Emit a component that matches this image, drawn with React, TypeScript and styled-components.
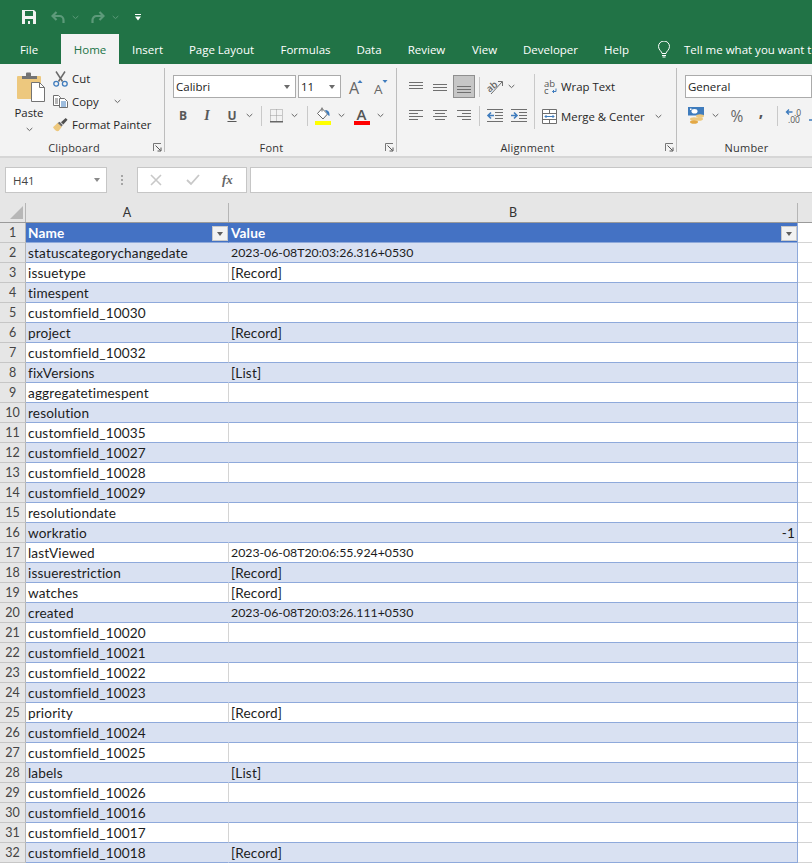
import styled, { createGlobalStyle } from "styled-components";

const rows: [string, string?][] = [
  ["statuscategorychangedate", "2023-06-08T20:03:26.316+0530"],
  ["issuetype", "[Record]"],
  ["timespent"],
  ["customfield_10030"],
  ["project", "[Record]"],
  ["customfield_10032"],
  ["fixVersions", "[List]"],
  ["aggregatetimespent"],
  ["resolution"],
  ["customfield_10035"],
  ["customfield_10027"],
  ["customfield_10028"],
  ["customfield_10029"],
  ["resolutiondate"],
  ["workratio", "-1"],
  ["lastViewed", "2023-06-08T20:06:55.924+0530"],
  ["issuerestriction", "[Record]"],
  ["watches", "[Record]"],
  ["created", "2023-06-08T20:03:26.111+0530"],
  ["customfield_10020"],
  ["customfield_10021"],
  ["customfield_10022"],
  ["customfield_10023"],
  ["priority", "[Record]"],
  ["customfield_10024"],
  ["customfield_10025"],
  ["labels", "[List]"],
  ["customfield_10026"],
  ["customfield_10016"],
  ["customfield_10017"],
  ["customfield_10018", "[Record]"],
];

const tabs: [string, number][] = [
  ["Insert", 57],
  ["Page Layout", 91],
  ["Formulas", 77],
  ["Data", 50],
  ["Review", 65],
  ["View", 51],
  ["Developer", 81],
  ["Help", 51],
];

const GlobalStyle = createGlobalStyle`
  html, body {
    margin: 0;
    height: 864px;
    overflow: hidden;
    background: #fff;
    font-family: "Open Sans", "Liberation Sans", sans-serif;
  }
`;

const Page = styled.div`
  width: 812px;
  height: 864px;
  overflow: hidden;
`;

const TitleBar = styled.div`
  height: 34px;
  background: #217346;
  display: flex;
  align-items: center;
  padding-left: 22px;
  svg { display: block; flex: none; }
`;

const TabBar = styled.div`
  height: 30px;
  background: #217346;
  display: flex;
  align-items: stretch;
  color: #fff;
  font-size: 11.5px;
  white-space: nowrap;
  overflow: hidden;
`;

const Tab = styled.div<{ $active?: boolean; $w: number }>`
  width: ${(p) => p.$w}px;
  flex: none;
  display: flex;
  align-items: center;
  justify-content: center;
  background: ${(p) => (p.$active ? "#f3f3f3" : "transparent")};
  color: ${(p) => (p.$active ? "#217346" : "#fff")};
`;

const TellMe = styled.div`
  display: flex;
  align-items: center;
  gap: 14px;
  padding-left: 16px;
`;

const Ribbon = styled.div`
  height: 94px;
  background: #f3f3f3;
  border-bottom: 2px solid #d6d6d6;
  box-sizing: border-box;
  display: flex;
  font-size: 11.4px;
  color: #262626;
  white-space: nowrap;
  overflow: hidden;
`;

const Group = styled.div<{ $w: number; $last?: boolean }>`
  width: ${(p) => p.$w}px;
  flex: none;
  box-sizing: border-box;
  margin-top: 4px;
  height: 84px;
  border-right: ${(p) => (p.$last ? "none" : "1px solid #bdbdbd")};
  display: flex;
  flex-direction: column;
`;

const GroupBody = styled.div<{ $pad: number }>`
  height: 70px;
  flex: none;
  padding-left: ${(p) => p.$pad}px;
  display: flex;
`;

const GroupFoot = styled.div<{ $shift: number }>`
  height: 14px;
  position: relative;
  padding: 0 ${(p) => Math.max(p.$shift, 0)}px 0 ${(p) => Math.max(-p.$shift, 0)}px;
  font-size: 11px;
  line-height: 20px;
  text-align: center;
  color: #333;
  letter-spacing: 0.2px;
`;

const LauncherIcon = styled.svg`
  position: absolute;
  right: 2px;
  top: 5px;
`;

const Launcher = () => (
  <LauncherIcon width="9" height="9" viewBox="0 0 9 9">
    <path d="M.5 8V.5H8" fill="none" stroke="#777" />
    <path d="M2.500 2.500l5 5M8 4.500V8H4.500" fill="none" stroke="#555" />
  </LauncherIcon>
);

const PasteCol = styled.div`
  width: 32px;
  flex: none;
  display: flex;
  flex-direction: column;
  align-items: center;
  padding-top: 4px;
`;

const PasteLabel = styled.div`
  margin-top: 2px;
  margin-bottom: 6px;
  line-height: 17px;
`;

const ClipList = styled.div`
  display: flex;
  flex-direction: column;
  margin: -1px 0 0 8px;
`;

const ClipItem = styled.div`
  height: 23px;
  flex: none;
  display: flex;
  align-items: center;
  gap: 4px;
`;

const Stack = styled.div<{ $w?: number }>`
  width: ${(p) => (p.$w ? `${p.$w}px` : "auto")};
  flex: none;
  display: flex;
  flex-direction: column;
  gap: 3px;
  padding-top: 7px;
`;

const WrapCol = styled.div`
  height: 55px;
  margin-top: 6px;
  flex: none;
  border-left: 1px solid #c9c9c9;
  display: flex;
  flex-direction: column;
  gap: 4px;
  padding-top: 1px;
  box-sizing: border-box;
`;

const ToolRow = styled.div<{ $pad?: number }>`
  height: 23px;
  flex: none;
  display: flex;
  align-items: center;
  margin-bottom: 3px;
  padding-left: ${(p) => p.$pad ?? 0}px;
  svg { display: block; flex: none; overflow: visible; }
`;

const Combo = styled.div<{ $w: number }>`
  width: ${(p) => p.$w}px;
  height: 23px;
  flex: none;
  box-sizing: border-box;
  background: #fff;
  border: 1px solid #ababab;
  display: flex;
  align-items: center;
  justify-content: space-between;
  padding: 0 5px 0 2px;
  font-size: 11.5px;
  color: #222;
`;

const Caret = styled.span<{ $color?: string }>`
  width: 0;
  height: 0;
  flex: none;
  border-left: 3.500px solid transparent;
  border-right: 3.500px solid transparent;
  border-top: 4px solid ${(p) => p.$color ?? "#6b6b6b"};
`;

const Gap = styled.span<{ $w: number }>`
  display: block;
  width: ${(p) => p.$w}px;
  flex: none;
`;

const VRule = styled.span`
  display: block;
  width: 1px;
  height: 20px;
  background: #c9c9c9;
  flex: none;
`;

const Glyph = styled.span<{ $italic?: boolean; $under?: boolean }>`
  width: 10px;
  flex: none;
  text-align: center;
  font-family: ${(p) => (p.$italic ? '"Liberation Serif", serif' : '"Open Sans", sans-serif')};
  font-weight: 700;
  font-style: ${(p) => (p.$italic ? "italic" : "normal")};
  font-size: ${(p) => (p.$italic ? 14 : 12)}px;
  color: #595959;
  text-decoration: ${(p) => (p.$under ? "underline" : "none")};
`;

const Percent = styled.span`
  width: 14px;
  flex: none;
  font-size: 15.500px;
  color: #666;
  text-align: center;
`;

const Comma = styled.span`
  width: 6px;
  flex: none;
  font-size: 16px;
  line-height: 14px;
  font-weight: 700;
  color: #555;
  text-align: center;
  position: relative;
  top: -5px;
`;

const Pressed = styled.span`
  width: 22px;
  height: 23px;
  flex: none;
  box-sizing: border-box;
  background: #c6c6c6;
  border: 1px solid #8f8f8f;
  display: flex;
  align-items: center;
  justify-content: center;
`;

const Chevron = ({ color = "#666" }: { color?: string }) => (
  <svg width="7" height="5" viewBox="0 0 7 5">
    <path d="M.7 1l2.800 2.600L6.300 1" fill="none" stroke={color} strokeWidth="1" />
  </svg>
);

const Lines = ({ ws, y = 2 }: { ws: [number, number][]; y?: number }) => (
  <svg width="16" height="16" viewBox="0 0 16 16">
    {ws.map(([x, w], i) => (
      <rect key={i} x={x} y={y + i * 3} width={w} height="1" fill="#6f6f6f" />
    ))}
  </svg>
);

const FormulaStrip = styled.div`
  height: 45px;
  background: #e6e6e6;
  box-sizing: border-box;
  display: flex;
  align-items: flex-start;
  padding: 9px 0 0 5px;
`;

const NameBox = styled.div`
  width: 102px;
  height: 26px;
  box-sizing: border-box;
  background: #fff;
  border: 1px solid #c6c6c6;
  display: flex;
  align-items: center;
  justify-content: space-between;
  padding: 0 6px 0 7px;
  font-size: 11.500px;
  color: #444;
  flex: none;
`;

const Dots = styled.div`
  width: 30px;
  height: 26px;
  flex: none;
  display: flex;
  flex-direction: column;
  align-items: center;
  justify-content: center;
  gap: 2px;
  i { width: 2px; height: 2px; background: #a5a5a5; }
`;

const FormulaButtons = styled.div`
  width: 110px;
  height: 26px;
  flex: none;
  box-sizing: border-box;
  background: #fff;
  border: 1px solid #c6c6c6;
  display: flex;
  align-items: center;
  padding-left: 12px;
`;

const FxLabel = styled.span`
  font-family: "Liberation Serif", serif;
  font-style: italic;
  font-size: 13px;
  color: #666;
  font-weight: 700;
`;

const FormulaInput = styled.div`
  flex: 1;
  height: 26px;
  margin-left: 3px;
  background: #fff;
  border: 1px solid #c6c6c6;
  border-right: none;
  box-sizing: border-box;
`;

const HeaderStrip = styled.div`
  height: 20px;
  display: flex;
  background: #e6e6e6;
  border-bottom: 1px solid #9a9a9a;
  box-sizing: border-box;
  font-family: "Lato", sans-serif;
  font-size: 12.500px;
  color: #333;
`;

const Corner = styled.div`
  width: 26px;
  flex: none;
  box-sizing: border-box;
  border-right: 1px solid #b5b5b5;
  position: relative;
  svg { position: absolute; left: 10px; bottom: 3px; }
`;

const ColHead = styled.div<{ $w: number }>`
  width: ${(p) => p.$w}px;
  flex: none;
  box-sizing: border-box;
  border-right: 1px solid #b5b5b5;
  display: flex;
  align-items: center;
  justify-content: center;
`;

const Row = styled.div`
  height: 20px;
  display: flex;
  font-family: "Lato", sans-serif;
  font-size: 13.600px;
  color: #222;
`;

const RowNo = styled.div`
  width: 26px;
  flex: none;
  box-sizing: border-box;
  background: #e6e6e6;
  border-right: 1px solid #b5b5b5;
  border-bottom: 1px solid #c6c6c6;
  color: #444;
  font-size: 12.500px;
  display: flex;
  align-items: center;
  justify-content: center;
`;

const Cell = styled.div<{
  $w: number;
  $band?: boolean;
  $head?: boolean;
  $right?: boolean;
  $rule?: boolean;
  $date?: boolean;
}>`
  width: ${(p) => p.$w}px;
  flex: none;
  box-sizing: border-box;
  background: ${(p) => (p.$head ? "#4472c4" : p.$band ? "#d9e1f2" : "#fff")};
  color: ${(p) => (p.$head ? "#fff" : "#1c1c1c")};
  font-weight: ${(p) => (p.$head ? 700 : 400)};
  font-size: ${(p) => (p.$date ? "12.300px" : "inherit")};
  letter-spacing: ${(p) => (p.$date ? 0 : 0.15)}px;
  border-bottom: 1px solid #8ea9db;
  border-right: 1px solid ${(p) => (p.$rule ? "#8ea9db" : p.$band || p.$head ? "transparent" : "#d4d4d4")};
  display: flex;
  align-items: center;
  justify-content: ${(p) => (p.$right ? "flex-end" : "space-between")};
  padding: 0 ${(p) => (p.$right ? 2 : 0)}px 0 2px;
  white-space: nowrap;
`;

const FilterBtn = styled.span`
  width: 16px;
  height: 15px;
  box-sizing: border-box;
  background: #f2f2f2;
  border: 1px solid #c9c9c9;
  display: flex;
  align-items: center;
  justify-content: center;
  align-self: flex-end;
  margin-bottom: 1px;
`;

const Outside = styled.div`
  flex: 1;
  background: #fff;
  border-bottom: 1px solid #d4d4d4;
`;

const FilterRow = () => (
  <FilterBtn>
    <Caret $color="#5f5f5f" />
  </FilterBtn>
);

const dim = "#5d9a7a";

export default function App() {
  return (
    <Page>
      <GlobalStyle />
      <TitleBar>
        <svg width="14" height="14" viewBox="0 0 14 14">
          <path d="M0 0h12l2 2v12H0z" fill="#f2f2f2" />
          <rect x="3" y="1" width="8" height="5" fill="#217346" />
          <rect x="3" y="9" width="8" height="5" fill="#217346" />
          <rect x="6" y="11" width="2" height="3" fill="#f2f2f2" />
        </svg>
        <Gap $w={15} />
        <svg width="14" height="13" viewBox="0 0 14 13">
          <path d="M5.500 1L1.500 5l4 4M1.500 5h7a4 4 0 0 1 4 4v3" fill="none" stroke={dim} strokeWidth="2.200" />
        </svg>
        <Gap $w={7} />
        <Chevron color={dim} />
        <Gap $w={12} />
        <svg width="14" height="13" viewBox="0 0 14 13">
          <path d="M8.500 1l4 4-4 4M12.500 5h-7a4 4 0 0 0-4 4v3" fill="none" stroke={dim} strokeWidth="2.200" />
        </svg>
        <Gap $w={7} />
        <Chevron color={dim} />
        <Gap $w={16} />
        <svg width="6" height="7" viewBox="0 0 6 7">
          <rect x="0" y="0" width="6" height="1" fill="#fff" />
          <path d="M0 2.500h6L3 6.500z" fill="#fff" />
        </svg>
      </TitleBar>
      <TabBar>
        <Tab $w={58}>File</Tab>
        <Gap $w={3} />
        <Tab $w={58} $active>Home</Tab>
        {tabs.map(([t, w]) => (
          <Tab key={t} $w={w}>{t}</Tab>
        ))}
        <TellMe>
          <svg width="12" height="17" viewBox="0 0 12 17">
            <path d="M4 12.500c0-2-3.500-3.500-3.500-7a5.500 5.500 0 0 1 11 0c0 3.500-3.500 5-3.500 7z" fill="none" stroke="#fff" />
            <path d="M4 14.500h4M4.500 16h3" stroke="#fff" />
          </svg>
          <span>Tell me what you want to do</span>
        </TellMe>
      </TabBar>
      <Ribbon>
        <Group $w={165}>
          <GroupBody $pad={13}>
            <PasteCol>
              <svg width="32" height="30" viewBox="0 0 32 30" style={{ display: "block" }}>
                <rect x="4" y="4" width="24" height="23" rx="1" fill="#edc87e" />
                <path d="M9 7V4h4V1.500a1 1 0 0 1 1-1h3a1 1 0 0 1 1 1V4h6v3z" fill="#737373" />
                <path d="M18.500 10.500h8l5 5v14h-13z" fill="#fff" stroke="#737373" />
                <path d="M26.500 10.500v5h5" fill="none" stroke="#737373" />
              </svg>
              <PasteLabel>Paste</PasteLabel>
              <Chevron />
            </PasteCol>
            <ClipList>
              <ClipItem>
                <svg width="15" height="16" viewBox="0 0 15 16" style={{ display: "block" }}>
                  <path d="M3 .5l6.500 10M12 .5L5.500 10.500" stroke="#6a6a6a" strokeWidth="1.500" />
                  <circle cx="3.200" cy="12.700" r="2.400" fill="none" stroke="#3f7cbd" strokeWidth="1.300" />
                  <circle cx="11.800" cy="12.700" r="2.400" fill="none" stroke="#3f7cbd" strokeWidth="1.300" />
                </svg>
                <span>Cut</span>
              </ClipItem>
              <ClipItem>
                <svg width="15" height="15" viewBox="0 0 15 15" style={{ display: "block" }}>
                  <path d="M.5 1.500h5l2 2v8h-7z" fill="#fff" stroke="#6f6f6f" />
                  <path d="M6.500 4.500h5l3 3v6h-8z" fill="#fff" stroke="#6f6f6f" />
                  <path d="M2 5h3M2 7h3M2 9h3" stroke="#6f6f6f" />
                  <path d="M8 8h5M8 10h5M8 12h5" stroke="#3f7cbd" />
                </svg>
                <span>Copy</span>
                <Gap $w={7} />
                <Chevron />
              </ClipItem>
              <ClipItem>
                <svg width="15" height="15" viewBox="0 0 16 15" style={{ display: "block" }}>
                  <path d="M0 10.500l5-5 4.500 4.500-3.500 4.500c-2 .5-4-.5-6-4z" fill="#edc87e" />
                  <path d="M5 6l2-1.500 3.500 3.500L9 9.500z" fill="#6a6a6a" />
                  <path d="M8.500 5l5-4.500 2 2-4.500 5z" fill="#4f4f4f" />
                </svg>
                <span>Format Painter</span>
              </ClipItem>
            </ClipList>
          </GroupBody>
          <GroupFoot $shift={16}>
            Clipboard
            <Launcher />
          </GroupFoot>
        </Group>
        <Group $w={232}>
          <GroupBody $pad={8}>
            <Stack>
              <ToolRow>
                <Combo $w={123}>Calibri<Caret /></Combo>
                <Gap $w={2} />
                <Combo $w={43}>11<Caret /></Combo>
                <Gap $w={8} />
                <svg width="15" height="16" viewBox="0 0 15 16">
                  <text x="0" y="15" fontSize="16" fill="#666" fontFamily="Open Sans, sans-serif">A</text>
                  <path d="M8.500 4l2.500-3 2.500 3z" fill="#3f7cbd" />
                </svg>
                <Gap $w={10} />
                <svg width="15" height="16" viewBox="0 0 15 16">
                  <text x="0" y="15" fontSize="13.500" fill="#666" fontFamily="Open Sans, sans-serif">A</text>
                  <path d="M8.500 1h5L11 4z" fill="#3f7cbd" />
                </svg>
              </ToolRow>
              <ToolRow $pad={5}>
                <Glyph>B</Glyph>
                <Gap $w={14} />
                <Glyph $italic>I</Glyph>
                <Gap $w={15} />
                <Glyph $under>U</Glyph>
                <Gap $w={9} />
                <Chevron />
                <Gap $w={8} />
                <VRule />
                <Gap $w={8} />
                <svg width="13" height="14" viewBox="0 0 13 14">
                  <path d="M.5.500h12v12H.500zM6.500.500v12M.500 6.500h12" fill="none" stroke="#9a9a9a" strokeDasharray="1 1" />
                  <rect x="0" y="12" width="13" height="1.500" fill="#666" />
                </svg>
                <Gap $w={8} />
                <Chevron />
                <Gap $w={9} />
                <VRule />
                <Gap $w={7} />
                <svg width="16" height="18" viewBox="0 0 16 18">
                  <path d="M7 1.500l5.500 5.500-4.500 5-5.500-5.500z" fill="#fff" stroke="#666" />
                  <path d="M7 .5v4" stroke="#666" />
                  <path d="M10 3c3 0 5 2 4.500 6-1.500-.5-2-2-4.500-6z" fill="#3f7cbd" />
                  <rect x="0" y="14" width="16" height="4" fill="#ffff00" />
                </svg>
                <Gap $w={7} />
                <Chevron />
                <Gap $w={9} />
                <svg width="16" height="18" viewBox="0 0 16 18">
                  <text x="2.500" y="12.500" fontSize="15" fontWeight="600" fill="#555" fontFamily="Open Sans, sans-serif">A</text>
                  <rect x="0" y="14" width="16" height="4" fill="#ff0000" />
                </svg>
                <Gap $w={7} />
                <Chevron />
              </ToolRow>
            </Stack>
          </GroupBody>
          <GroupFoot $shift={18}>
            Font
            <Launcher />
          </GroupFoot>
        </Group>
        <Group $w={280}>
          <GroupBody $pad={11}>
            <Stack $w={126}>
              <ToolRow>
                <Lines ws={[[1, 14], [1, 14], [1, 14]]} y={3} />
                <Gap $w={8} />
                <Lines ws={[[1, 14], [1, 14], [1, 14]]} y={5} />
                <Gap $w={5} />
                <Pressed>
                  <Lines ws={[[1, 14], [1, 14], [1, 14]]} y={7} />
                </Pressed>
                <Gap $w={4} />
                <VRule />
                <Gap $w={7} />
                <svg width="17" height="16" viewBox="0 0 17 16">
                  <text x="0" y="11" fontSize="9.500" fill="#666" fontWeight="600" fontFamily="Open Sans, sans-serif" transform="rotate(-40 5 9)">ab</text>
                  <path d="M4 15L15 3M11 2.500h4.500V7" fill="none" stroke="#6f6f6f" />
                </svg>
                <Gap $w={4} />
                <Chevron />
              </ToolRow>
              <ToolRow>
                <Lines ws={[[1, 14], [1, 9], [1, 14], [1, 9]]} y={2} />
                <Gap $w={8} />
                <Lines ws={[[1, 14], [3, 10], [1, 14], [3, 10]]} y={2} />
                <Gap $w={8} />
                <Lines ws={[[1, 14], [6, 9], [1, 14], [6, 9]]} y={2} />
                <Gap $w={7} />
                <VRule />
                <Gap $w={7} />
                <svg width="17" height="14" viewBox="0 0 17 14">
                  <path d="M0 .5h16M8 3.500h8M8 6.500h8M8 9.500h8M0 12.500h16" stroke="#6f6f6f" />
                  <path d="M7 6.500H1.500M4 3.500l-3 3 3 3" fill="none" stroke="#3f7cbd" strokeWidth="1.600" />
                </svg>
                <Gap $w={7} />
                <svg width="17" height="14" viewBox="0 0 17 14">
                  <path d="M0 .5h16M8 3.500h8M8 6.500h8M8 9.500h8M0 12.500h16" stroke="#6f6f6f" />
                  <path d="M0 6.500h5.500M3 3.500l3 3-3 3" fill="none" stroke="#3f7cbd" strokeWidth="1.600" />
                </svg>
              </ToolRow>
            </Stack>
            <WrapCol>
              <ToolRow $pad={9}>
                <svg width="13" height="16" viewBox="0 0 13 16">
                  <text x="0" y="7.500" fontSize="9.500" fill="#555" fontFamily="Open Sans, sans-serif">ab</text>
                  <text x="0" y="15" fontSize="9.500" fill="#555" fontFamily="Open Sans, sans-serif">c</text>
                  <path d="M12 9.500v3H8.500M10 11l-1.500 1.500L10 14" fill="none" stroke="#3f7cbd" />
                </svg>
                <Gap $w={4} />
                <span>Wrap Text</span>
              </ToolRow>
              <ToolRow $pad={7}>
                <svg width="15" height="15" viewBox="0 0 15 15">
                  <path d="M.5.500h14v14H.500zM.500 4.500h14M.500 10.500h14M7.500.500v4M7.500 10.500v4" fill="#fff" stroke="#6f6f6f" />
                  <path d="M3 7.500h9M4.500 6L3 7.500 4.500 9M10.500 6L12 7.500 10.500 9" fill="none" stroke="#3f7cbd" />
                </svg>
                <Gap $w={4} />
                <span>Merge &amp; Center</span>
                <Gap $w={10} />
                <Chevron />
              </ToolRow>
            </WrapCol>
          </GroupBody>
          <GroupFoot $shift={18}>
            Alignment
            <Launcher />
          </GroupFoot>
        </Group>
        <Group $w={135} $last>
          <GroupBody $pad={8}>
            <Stack>
              <ToolRow>
                <Combo $w={127}>General</Combo>
              </ToolRow>
              <ToolRow $pad={3}>
                <svg width="16" height="17" viewBox="0 0 16 17">
                  <rect x="0" y="0" width="16" height="8.500" fill="#3f7cbd" />
                  <ellipse cx="6.500" cy="4.200" rx="3" ry="2.300" fill="#fff" />
                  <rect x="2" y="1.500" width="1.500" height="1.500" fill="#fff" />
                  <ellipse cx="12" cy="9" rx="4" ry="1.800" fill="#edc87e" />
                  <ellipse cx="11" cy="12" rx="4" ry="1.800" fill="#edc87e" />
                  <ellipse cx="6" cy="12" rx="4" ry="1.800" fill="#edc87e" />
                  <ellipse cx="6" cy="15" rx="4" ry="1.800" fill="#e3a845" />
                </svg>
                <Gap $w={8} />
                <Chevron />
                <Gap $w={11} />
                <Percent>%</Percent>
                <Gap $w={14} />
                <Comma>,</Comma>
                <Gap $w={13} />
                <VRule />
                <Gap $w={7} />
                <svg width="18" height="16" viewBox="0 0 18 16">
                  <path d="M7.500 4H1.500M4 1.500L1.500 4 4 6.500" fill="none" stroke="#3f7cbd" strokeWidth="1.400" />
                  <text x="9" y="7.500" fontSize="8.500" fill="#555" fontFamily="Open Sans, sans-serif">.0</text>
                  <text x="3" y="15" fontSize="8.500" fill="#555" fontFamily="Open Sans, sans-serif">.00</text>
                </svg>
                <Gap $w={6} />
                <svg width="14" height="16" viewBox="0 0 14 16">
                  <text x="5" y="7.500" fontSize="8.500" fill="#555" fontFamily="Open Sans, sans-serif">.00</text>
                  <path d="M0 12h6M3.500 9.500L6 12l-2.500 2.500" fill="none" stroke="#3f7cbd" strokeWidth="1.400" />
                </svg>
              </ToolRow>
            </Stack>
          </GroupBody>
          <GroupFoot $shift={-4}>Number</GroupFoot>
        </Group>
      </Ribbon>
      <FormulaStrip>
        <NameBox>H41<Caret $color="#8a8a8a" /></NameBox>
        <Dots><i /><i /><i /></Dots>
        <FormulaButtons>
          <svg width="12" height="12" viewBox="0 0 12 12" style={{ display: "block" }}>
            <path d="M1 1l10 10M11 1L1 11" stroke="#c8c8c8" strokeWidth="1.600" />
          </svg>
          <Gap $w={24} />
          <svg width="14" height="12" viewBox="0 0 14 12" style={{ display: "block" }}>
            <path d="M1 6l4 4 8-9" fill="none" stroke="#c8c8c8" strokeWidth="1.800" />
          </svg>
          <Gap $w={22} />
          <FxLabel>fx</FxLabel>
        </FormulaButtons>
        <FormulaInput />
      </FormulaStrip>
      <HeaderStrip>
        <Corner>
          <svg width="13" height="13" viewBox="0 0 13 13">
            <path d="M13 0v13H0z" fill="#b7b7b7" />
          </svg>
        </Corner>
        <ColHead $w={203}>A</ColHead>
        <ColHead $w={569}>B</ColHead>
      </HeaderStrip>
      <Row>
        <RowNo>1</RowNo>
        <Cell $w={203} $head>Name<FilterRow /></Cell>
        <Cell $w={569} $head $rule>Value<FilterRow /></Cell>
        <Outside />
      </Row>
      {rows.map(([name, value], i) => (
        <Row key={i}>
          <RowNo>{i + 2}</RowNo>
          <Cell $w={203} $band={i % 2 === 0}>{name}</Cell>
          <Cell
            $w={569}
            $band={i % 2 === 0}
            $rule
            $right={value === "-1"}
            $date={!!value && value.startsWith("2023")}
          >
            {value}
          </Cell>
          <Outside />
        </Row>
      ))}
    </Page>
  );
}
